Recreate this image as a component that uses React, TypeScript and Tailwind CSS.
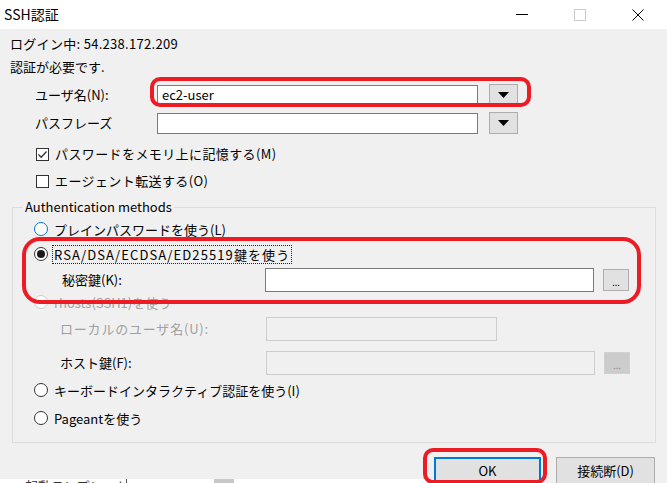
import type { ReactNode } from "react";

const FONT = {
  fontFamily: '"Noto Sans CJK JP", "Noto Sans", sans-serif',
};

// Win10-style window chrome glyphs
function TitleBar() {
  return (
    <div className="flex h-[29px] items-center bg-white">
      <span className="flex-1 pl-[4px] text-[14px] text-black">SSH認証</span>
      <div className="flex h-full w-[58px] items-center justify-center">
        <span className="block h-px w-[12px] bg-black" />
      </div>
      <div className="flex h-full w-[58px] items-center justify-center">
        <span className="block h-[12px] w-[12px] border border-[#cccccc]" />
      </div>
      <div className="flex h-full w-[58px] items-center justify-center">
        <svg width="12" height="12" viewBox="0 0 12 12">
          <path d="M0.5 0.5 L11.5 11.5 M11.5 0.5 L0.5 11.5" stroke="#000" strokeWidth="1" />
        </svg>
      </div>
    </div>
  );
}

function DropButton() {
  return (
    <div className="ml-[11px] flex h-[22px] w-[29px] items-center justify-center border border-[#adadad] bg-[#e1e1e1]">
      <svg width="11" height="6" viewBox="0 0 11 6">
        <path d="M0 0 H11 L5.5 6 Z" fill="#000" />
      </svg>
    </div>
  );
}

function Checkbox({ checked, children }: { checked?: boolean; children: ReactNode }) {
  return (
    <div className="flex h-[20px] items-center pl-[36px]">
      <span className="flex h-[13px] w-[13px] items-center justify-center border border-[#333333] bg-white">
        {checked && (
          <svg width="11" height="11" viewBox="0 0 11 11">
            <path d="M1.5 5.5 L4.2 8.2 L9.5 2.5" fill="none" stroke="#333" strokeWidth="1.3" />
          </svg>
        )}
      </span>
      <span className="ml-[6px] tracking-[0.4px]">{children}</span>
    </div>
  );
}

function Radio({
  checked,
  hover,
  disabled,
  focus,
  wide,
  children,
}: {
  checked?: boolean;
  hover?: boolean;
  disabled?: boolean;
  focus?: boolean;
  wide?: boolean;
  children: ReactNode;
}) {
  const ring = disabled
    ? "border-[#cccccc]"
    : hover
      ? "border-[#0078d7]"
      : "border-[#333333]";
  return (
    <div className="flex h-[20px] items-center pl-[21px]">
      <span
        className={`flex h-[14px] w-[14px] items-center justify-center rounded-full border bg-white ${ring}`}
      >
        {checked && <span className="block h-[8px] w-[8px] rounded-full bg-[#1b1b1b]" />}
      </span>
      <span
        className={`ml-[4px] px-[1px] leading-[17px] ${wide ? "tracking-[1.1px]" : ""} ${
          focus ? "border border-dotted border-[#222]" : "border border-transparent"
        } ${disabled ? "text-[#a0a0a0]" : "text-black"}`}
      >
        {children}
      </span>
    </div>
  );
}

function Browse({ disabled }: { disabled?: boolean }) {
  return (
    <div
      className={`ml-[9px] flex h-[22px] w-[26px] items-end justify-center pb-[3px] text-[9px] leading-none ${
        disabled
          ? "border border-[#d0d0d0] bg-[#cccccc] text-[#8a8a8a]"
          : "border border-[#adadad] bg-[#e1e1e1] text-black"
      }`}
    >
      ...
    </div>
  );
}

export default function App() {
  return (
    <div
      className="relative h-[483px] w-[667px] overflow-hidden bg-[#f0f0f0] text-[13px] text-black"
      style={FONT}
    >
      <TitleBar />

      <div className="pl-[10px] pt-[3px]">
        <div className="flex h-[23px] items-center tracking-[0.3px]">ログイン中: 54.238.172.209</div>
        <div className="flex h-[23px] items-center">認証が必要です.</div>
      </div>

      <div className="mt-[6px] flex h-[22px] items-center pl-[35px]">
        <span className="w-[122px]">ユーザ名(N):</span>
        <div className="flex h-[21px] w-[321px] items-center border border-[#7a7a7a] bg-white pl-[4px]">
          ec2-user
        </div>
        <DropButton />
      </div>

      <div className="mt-[6px] flex h-[22px] items-center pl-[35px]">
        <span className="w-[122px]">パスフレーズ</span>
        <div className="h-[21px] w-[321px] border border-[#7a7a7a] bg-white" />
        <DropButton />
      </div>

      <div className="mt-[10px]">
        <Checkbox checked>パスワードをメモリ上に記憶する(M)</Checkbox>
      </div>
      <div className="mt-[7px]">
        <Checkbox>エージェント転送する(O)</Checkbox>
      </div>

      <div className="relative ml-[12px] mt-[16px] h-[236px] w-[644px] border border-[#dcdcdc] pt-[11px]">
        <span className="absolute -top-[11px] left-[10px] bg-[#f0f0f0] px-[2px] leading-[20px]">
          Authentication methods
        </span>

        <Radio hover>プレインパスワードを使う(L)</Radio>
        <div className="mt-[5px]">
          <Radio checked focus wide>
            RSA/DSA/ECDSA/ED25519鍵を使う
          </Radio>
        </div>

        <div className="mt-[4px] flex h-[24px] items-center pl-[49px]">
          <span className="w-[203px]">秘密鍵(K):</span>
          <div className="h-[24px] w-[329px] border border-[#7a7a7a] bg-white" />
          <Browse />
        </div>

        <Radio disabled>rhosts(SSH1)を使う</Radio>

        <div className="mt-[5px] flex h-[24px] items-center pl-[47px]">
          <span className="w-[206px] tracking-[0.8px] text-[#a0a0a0]">ローカルのユーザ名(U):</span>
          <div className="h-[24px] w-[231px] border border-[#cccccc] bg-[#f0f0f0]" />
        </div>

        <div className="mt-[10px] flex h-[24px] items-center pl-[47px]">
          <span className="w-[206px]">ホスト鍵(F):</span>
          <div className="h-[24px] w-[329px] border border-[#cccccc] bg-[#f0f0f0]" />
          <Browse disabled />
        </div>

        <div className="mt-[5px]">
          <Radio>キーボードインタラクティブ認証を使う(I)</Radio>
        </div>
        <div className="mt-[8px]">
          <Radio>Pageantを使う</Radio>
        </div>
      </div>

      <div className="flex h-[40px]">
        <div className="flex flex-1 flex-col justify-end">
          <div className="relative h-[4px] overflow-hidden bg-white">
            <span className="absolute left-[25px] top-[-1px] text-[13px] leading-[16px] text-[#333]">
              起動テンプレート
            </span>
            <span className="absolute left-[126px] top-0 h-[4px] w-px bg-[#555]" />
            <span className="absolute left-[214px] top-0 h-[4px] w-[20px] bg-[#c8c8c8]" />
          </div>
        </div>
        <div className="flex pr-[12px] pt-[14px]">
          <div className="flex h-[27px] w-[107px] items-center justify-center border-2 border-[#0078d7] bg-[#e1e1e1]">
            OK
          </div>
          <div className="ml-[15px] flex h-[27px] w-[99px] items-center justify-center border border-[#adadad] bg-[#e1e1e1]">
            接続断(D)
          </div>
        </div>
      </div>

      {/* red annotation marks */}
      <div className="pointer-events-none absolute left-[150px] top-[77px] h-[30px] w-[381px] rounded-[10px] border-4 border-[#ed1c24]" />
      <div className="pointer-events-none absolute left-[22px] top-[237px] h-[67px] w-[619px] rounded-[18px] border-4 border-[#ed1c24]" />
      <div className="pointer-events-none absolute left-[423px] top-[448px] h-[36px] w-[124px] rounded-[10px] border-4 border-[#ed1c24]" />
    </div>
  );
}
